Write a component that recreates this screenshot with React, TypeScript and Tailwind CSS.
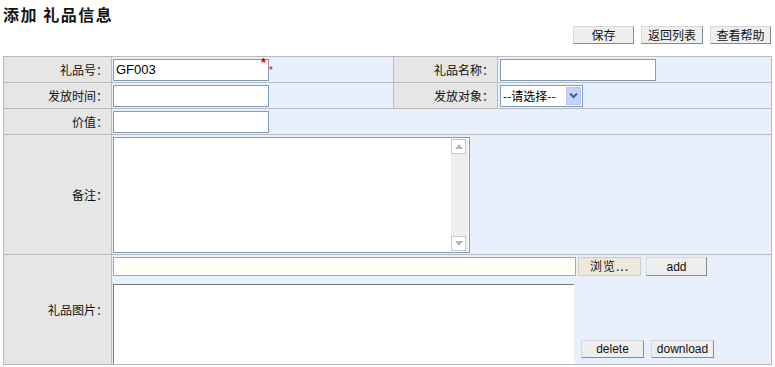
import React from "react";

const font = { fontFamily: '"Noto Sans CJK SC", "Liberation Sans", sans-serif' };

function Btn({ children, w, className = "" }: { children: React.ReactNode; w: string; className?: string }) {
  return (
    <div
      className={`flex items-center justify-center h-[18px] border border-t-[#d8d8d8] border-l-[#d8d8d8] border-r-[#8a8a8a] border-b-[#8a8a8a] bg-[#efefef] text-[12px] leading-none text-[#111] ${w} ${className}`}
    >
      {children}
    </div>
  );
}

function Label({ children, h }: { children: React.ReactNode; h: string }) {
  return (
    <div className={`${h} bg-[#e6e6e6] border-r border-b border-[#bababa] flex items-center justify-end pr-[3px] text-[12px] text-[#111]`}>
      {children}
    </div>
  );
}

function Input({ w, value }: { w: string; value?: string }) {
  return (
    <div className={`${w} h-[22px] bg-white border border-[#7f9db9] flex items-center pl-[2px] text-[13px] text-black`} style={{ fontFamily: '"Liberation Sans", sans-serif' }}>
      {value}
    </div>
  );
}

export default function App() {
  return (
    <div className="w-[775px] h-[367px] bg-white overflow-hidden" style={font}>
      <div className="pl-[3px] pt-[3px] h-[25px] text-[16px] font-bold leading-[22px] text-[#111] tracking-[1.5px]">添加&nbsp;礼品信息</div>
      <div className="flex justify-end gap-[7px] pr-[4px] pt-[1px] h-[31px]">
        <Btn w="w-[61px]">保存</Btn>
        <Btn w="w-[62px]">返回列表</Btn>
        <Btn w="w-[61px]">查看帮助</Btn>
      </div>
      <div className="ml-[3px] w-[769px] border-l border-t border-[#bababa] grid grid-cols-[108px_282px_104px_274px]">
        {/* row 1 */}
        <Label h="h-[26px]">礼品号：</Label>
        <div className="h-[26px] bg-[#e9f0fd] border-r border-b border-[#bababa] flex items-center pl-[1px] relative">
          <Input w="w-[156px]" value="GF003" />
          <span className="absolute left-[149px] top-[-1px] text-[13px] leading-none text-[#e00000] font-bold" style={{ fontFamily: '"Liberation Sans", sans-serif' }}>*</span>
          <span className="absolute left-[157px] top-[9px] text-[10px] leading-none text-[#e00000]" style={{ fontFamily: '"Liberation Sans", sans-serif' }}>*</span>
        </div>
        <Label h="h-[26px]">礼品名称：</Label>
        <div className="h-[26px] bg-[#e9f0fd] border-r border-b border-[#bababa] flex items-center pl-[2px]">
          <Input w="w-[156px]" />
        </div>
        {/* row 2 */}
        <Label h="h-[26px]">发放时间：</Label>
        <div className="h-[26px] bg-[#e9f0fd] border-r border-b border-[#bababa] flex items-center pl-[1px]">
          <Input w="w-[156px]" />
        </div>
        <Label h="h-[26px]">发放对象：</Label>
        <div className="h-[26px] bg-[#e9f0fd] border-r border-b border-[#bababa] flex items-center pl-[2px]">
          <div className="w-[83px] h-[22px] bg-white border border-[#7f9db9] flex items-center justify-between pl-[2px] pr-[1px] text-[12px] text-black">
            <span>--请选择--</span>
            <div className="w-[15px] h-[18px] bg-[#c3d3fd] border border-[#b7c9f3] flex items-center justify-center">
              <svg width="9" height="7" viewBox="0 0 9 7"><path d="M1 1.5 L4.5 5 L8 1.5" stroke="#4d6185" strokeWidth="2" fill="none" /></svg>
            </div>
          </div>
        </div>
        {/* row 3 */}
        <Label h="h-[26px]">价值：</Label>
        <div className="col-span-3 h-[26px] bg-[#e9f0fd] border-r border-b border-[#bababa] flex items-center pl-[1px]">
          <Input w="w-[156px]" />
        </div>
        {/* row 4 */}
        <Label h="h-[120px]">备注：</Label>
        <div className="col-span-3 h-[120px] bg-[#e9f0fd] border-r border-b border-[#bababa] pl-[1px] pt-[2px]">
          <div className="w-[357px] h-[116px] bg-white border border-[#7f9db9] flex justify-end p-[1px]">
            <div className="w-[17px] h-full bg-[#eeeeee] flex flex-col justify-between">
              <div className="w-[15px] h-[15px] bg-white border border-[#c8c8c8] flex items-center justify-center">
                <svg width="8" height="5" viewBox="0 0 8 5"><path d="M0 5 L4 0 L8 5Z" fill="#b5b5b5" /></svg>
              </div>
              <div className="w-[15px] h-[15px] bg-white border border-[#c8c8c8] flex items-center justify-center">
                <svg width="8" height="5" viewBox="0 0 8 5"><path d="M0 0 L4 5 L8 0Z" fill="#b5b5b5" /></svg>
              </div>
            </div>
          </div>
        </div>
        {/* row 5 */}
        <Label h="h-[110px]">礼品图片：</Label>
        <div className="col-span-3 h-[110px] bg-[#e9f0fd] border-r border-b border-[#bababa] pl-[1px] pt-[1px] flex flex-col">
          <div className="flex items-center h-[20px]">
            <div className="w-[463px] h-[19px] bg-[#fffffa] border border-[#a9a99f]" />
            <div className="ml-[2px] w-[63px] h-[19px] bg-[#ece9d8] border border-[#d0cdbd] flex items-center justify-center text-[12px] text-[#111] tracking-[1px]">浏览...</div>
            <Btn w="w-[61px]" className="ml-[5px] mt-[1px] h-[19px]">
              <span style={{ fontFamily: '"Liberation Sans", sans-serif' }}>add</span>
            </Btn>
          </div>
          <div className="flex mt-[8px] flex-1">
            <div className="w-[461px] h-full bg-white border-t border-l border-[#7a7a7a]" />
            <div className="flex items-end gap-[7px] pl-[7px] pb-[6px]">
              <Btn w="w-[63px]">
                <span style={{ fontFamily: '"Liberation Sans", sans-serif' }}>delete</span>
              </Btn>
              <Btn w="w-[63px]">
                <span style={{ fontFamily: '"Liberation Sans", sans-serif' }}>download</span>
              </Btn>
            </div>
          </div>
        </div>
      </div>
    </div>
  );
}
